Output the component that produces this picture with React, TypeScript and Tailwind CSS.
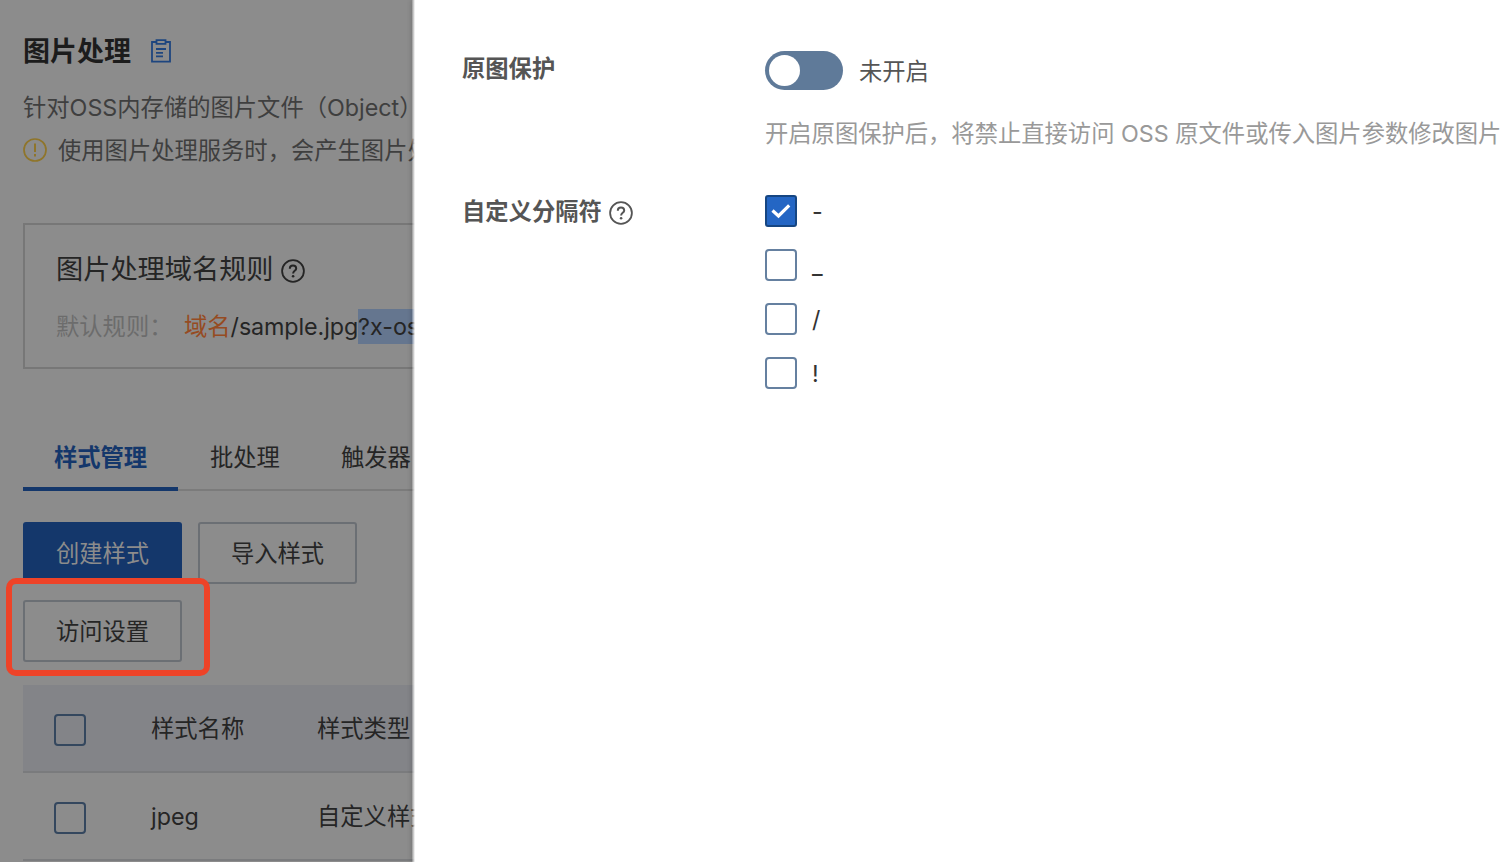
import React from 'react';

function HelpIcon({ className }: { className: string }) {
  return (
    <svg className={className} width="24" height="24" viewBox="0 0 24 24" fill="none" stroke="currentColor">
      <circle cx="12" cy="12" r="10.9" strokeWidth="1.8" />
      <path d="M8.8 9.7c0-2 1.3-3.2 3.2-3.2s3.2 1.2 3.2 2.9c0 2.4-3.1 2.5-3.1 5" strokeWidth="2" />
      <circle cx="12.1" cy="17.2" r="1.3" fill="currentColor" stroke="none" />
    </svg>
  );
}

function Separator({ label, checked }: { label: string; checked?: boolean }) {
  return (
    <div className="flex h-8 items-center">
      {checked ? (
        <div className="flex size-8 items-center justify-center rounded-[3px] border-2 border-[#164682] bg-[#2466c4]">
          <svg width="20" height="16" viewBox="0 0 20 16" fill="none" stroke="#fff" strokeWidth="3.2">
            <path d="M1.5 7.5 7.5 13 18.2 2.3" />
          </svg>
        </div>
      ) : (
        <div className="size-8 rounded-[4px] border-2 border-[#6580a0]" />
      )}
      <span className="ml-[15px] pt-[2px] text-[#333]">{label}</span>
    </div>
  );
}

function TableCheckbox() {
  return <div className="ml-[31px] mt-[4px] size-8 shrink-0 rounded-[4px] border-2 border-[#34475e]" />;
}

export default function App() {
  return (
    <div className="flex h-[862px] w-[1500px] overflow-hidden bg-[#8c8c8c] font-['Inter','Noto_Sans_CJK_SC',sans-serif] text-[23.3px] leading-[36px] whitespace-nowrap text-[#252525]">
      {/* 背景页面 */}
      <div className="relative h-full w-[415px] shrink-0 overflow-hidden pl-[23px]">
        <div className="mt-[33px] flex h-9 items-center">
          <h1 className="pt-[2px] text-[27px] font-bold text-[#1c1c1c]">图片处理</h1>
          <svg className="ml-5" width="20" height="24" viewBox="0 0 20 24" fill="none" stroke="#1d457f" strokeWidth="1.8">
            <path d="M5 3H1v19.6h18V3h-4" />
            <path d="M5.5 1.2h9v3.6h-9z" />
            <path d="M5 10h10M5 13.8h7M5 17.4h7" />
          </svg>
        </div>
        <p className="mt-[21px] text-[#3f3f3f]">针对OSS内存储的图片文件（Object）</p>
        <div className="mt-[6px] flex h-9 items-center text-[#3f3f3f]">
          <svg className="shrink-0" width="24" height="24" viewBox="0 0 24 24" fill="none" stroke="#8f752a" strokeWidth="1.7">
            <circle cx="12" cy="12" r="11" />
            <path d="M12 5.5v8.5M12 16v2.5" strokeWidth="2" />
          </svg>
          <span className="ml-[11px] pt-[2px]">使用图片处理服务时，会产生图片处理费用</span>
        </div>

        <div className="mt-[55px] h-[146px] w-[600px] border-2 border-[#777] pl-[31px]">
          <div className="mt-[27px] flex h-9 items-center text-[27.2px]">
            图片处理域名规则
            <HelpIcon className="mt-[1px] ml-[7px]" />
          </div>
          <div className="mt-[21px] flex h-9 items-center">
            <span className="w-[128px] text-[#6c6c6c]">默认规则：</span>
            <span className="text-[#964b22]">域名</span>
            <span className="tracking-[-0.1px]">/sample.jpg</span>
            <span className="-mt-px bg-[#65768f] leading-[35px]">?x-oss-process</span>
          </div>
        </div>

        <div className="mt-[52px] flex h-[70px] w-[600px] border-b-2 border-[#7b7b7b]">
          <div className="h-[70px] w-[155px] border-b-4 border-[#14376b] pt-[19px] text-center font-bold text-[#14376b]">样式管理</div>
          <div className="ml-8 pt-[19px]">批处理</div>
          <div className="ml-[61px] pt-[19px]">触发器</div>
        </div>

        <div className="mt-[31px] flex w-[380px] flex-wrap gap-4">
          <button className="h-[62px] w-[159px] rounded-[3px] bg-[#14376b] pt-[2px] text-[#8c8c8c]">创建样式</button>
          <button className="h-[62px] w-[159px] rounded-[3px] border-2 border-[#6b6f74] pt-[2px]">导入样式</button>
          <div className="relative">
            <button className="h-[62px] w-[159px] rounded-[3px] border-2 border-[#6b6f74] pt-[2px]">访问设置</button>
            <div className="absolute -top-[22px] -left-[17px] h-[98px] w-[204px] rounded-[10px] border-[6px] border-[#ee4328]" />
          </div>
        </div>

        <div className="mt-[23px] w-[600px]">
          <div className="flex h-[88px] items-center border-b-2 border-[#7a7b7d] bg-[#838488]">
            <TableCheckbox />
            <span className="ml-[65px] w-[166px] pt-[2px]">样式名称</span>
            <span className="pt-[2px]">样式类型</span>
          </div>
          <div className="flex h-[88px] items-center border-b-2 border-[#7a7b7d]">
            <TableCheckbox />
            <span className="ml-[65px] w-[166px] pt-[2px]">jpeg</span>
            <span className="pt-[2px]">自定义样式</span>
          </div>
        </div>

        {/* 抽屉边缘 */}
        <div className="absolute top-0 right-0 h-full w-[3px] bg-linear-to-r from-white/10 to-white shadow-[0_0_5px_rgba(0,0,0,0.25)]" />
      </div>

      {/* 访问设置抽屉 */}
      <div className="h-full flex-1 bg-white pl-[47px]">
        <div className="mt-[51px] flex">
          <div className="w-[303px] font-bold text-[#555]">原图保护</div>
          <div>
            <div className="flex h-[39px] items-center text-[#555]">
              <div className="h-[39px] w-[78px] rounded-full bg-[#5f7a99] p-1">
                <div className="size-[31px] rounded-full bg-white" />
              </div>
              <span className="ml-4 pt-[2px]">未开启</span>
            </div>
            <p className="mt-[26px] text-[#999]">开启原图保护后，将禁止直接访问 OSS 原文件或传入图片参数修改图片样式</p>
          </div>
        </div>
        <div className="mt-[42px] flex">
          <div className="flex h-9 w-[303px] items-center font-bold text-[#555]">
            自定义分隔符
            <HelpIcon className="mt-[1px] ml-[7px]" />
          </div>
          <div className="mt-[0.6px] flex flex-col gap-[22.3px]">
            <Separator label="-" checked />
            <Separator label="_" />
            <Separator label="/" />
            <Separator label="!" />
          </div>
        </div>
      </div>
    </div>
  );
}
